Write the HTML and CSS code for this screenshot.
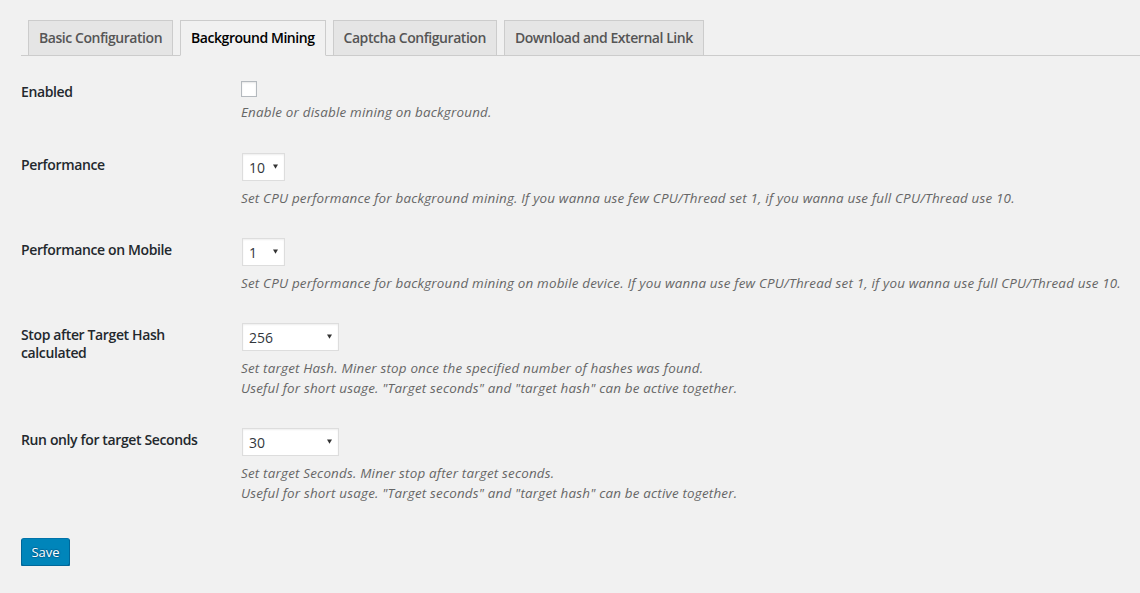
FILE: index.html
```html
<!DOCTYPE html>
<html lang="en">
<head>
<meta charset="utf-8">
<title>Background Mining</title>
<link rel="stylesheet" href="styles.css">
</head>
<body>
<div class="wrap">
  <nav class="tabs">
    <a class="tab">Basic Configuration</a>
    <a class="tab active">Background Mining</a>
    <a class="tab">Captcha Configuration</a>
    <a class="tab">Download and External Link</a>
  </nav>
  <form class="settings">
    <table class="form-table">
      <tr class="row-check">
        <th>Enabled</th>
        <td>
          <div class="ctl-check"><span class="checkbox"></span></div>
          <p class="description">Enable or disable mining on background.</p>
        </td>
      </tr>
      <tr>
        <th>Performance</th>
        <td>
          <div class="select small"><span class="val">10</span><svg class="arrow" width="5" height="5" viewBox="0 0 5 5"><polygon points="0,0.5 5,0.5 2.5,4.8" fill="#333"/></svg></div>
          <p class="description">Set CPU performance for background mining. If you wanna use few CPU/Thread set 1, if you wanna use full CPU/Thread use 10.</p>
        </td>
      </tr>
      <tr>
        <th>Performance on Mobile</th>
        <td>
          <div class="select small"><span class="val">1</span><svg class="arrow" width="5" height="5" viewBox="0 0 5 5"><polygon points="0,0.5 5,0.5 2.5,4.8" fill="#333"/></svg></div>
          <p class="description">Set CPU performance for background mining on mobile device. If you wanna use few CPU/Thread set 1, if you wanna use full CPU/Thread use 10.</p>
        </td>
      </tr>
      <tr>
        <th>Stop after Target Hash calculated</th>
        <td>
          <div class="select wide"><span class="val">256</span><svg class="arrow" width="5" height="5" viewBox="0 0 5 5"><polygon points="0,0.5 5,0.5 2.5,4.8" fill="#333"/></svg></div>
          <p class="description">Set target Hash. Miner stop once the specified number of hashes was found.<br>Useful for short usage. "Target seconds" and "target hash" can be active together.</p>
        </td>
      </tr>
      <tr>
        <th>Run only for target Seconds</th>
        <td>
          <div class="select wide"><span class="val">30</span><svg class="arrow" width="5" height="5" viewBox="0 0 5 5"><polygon points="0,0.5 5,0.5 2.5,4.8" fill="#333"/></svg></div>
          <p class="description">Set target Seconds. Miner stop after target seconds.<br>Useful for short usage. "Target seconds" and "target hash" can be active together.</p>
        </td>
      </tr>
    </table>
    <div class="submit"><button type="button" class="button-primary">Save</button></div>
  </form>
</div>
</body>
</html>
```

FILE: styles.css
```css
html, body {
  margin: 0;
  background: #f1f1f1;
}
body {
  font-family: "Open Sans", "Noto Sans", "Liberation Sans", sans-serif;
  font-size: 13px;
  color: #444;
}
.wrap {
  padding-left: 21px;
}
.tabs {
  display: flex;
  gap: 7px;
  padding: 20px 0 0 7px;
  border-bottom: 1px solid #ccc;
}
.tab {
  display: block;
  padding: 5px 10px;
  line-height: 24px;
  font-size: 14px;
  font-weight: 600;
  letter-spacing: -0.45px;
  color: #555;
  background: #e5e5e5;
  border: 1px solid #ccc;
  margin-bottom: -1px;
  white-space: nowrap;
  text-decoration: none;
}
.tab.active {
  background: #f1f1f1;
  color: #000;
  border-bottom-color: #f1f1f1;
}
.settings {
  margin-top: 8px;
}
.form-table {
  border-collapse: collapse;
}
.form-table th {
  width: 200px;
  padding: 19px 10px 14px 0;
  text-align: left;
  vertical-align: top;
  font-size: 14px;
  font-weight: 600;
  line-height: 18px;
  letter-spacing: -0.37px;
  color: #23282d;
}
.form-table td {
  padding: 16px 10px 14px;
  vertical-align: top;
}
.row-check td {
  padding-bottom: 15px;
}
.ctl-check {
  padding-top: 1px;
}
.checkbox {
  display: block;
  box-sizing: border-box;
  width: 16px;
  height: 16px;
  border: 1px solid #b4b9be;
  background: #fff;
  box-shadow: inset 0 1px 2px rgba(0,0,0,.1);
}
.row-check .description {
  margin-top: 5px;
}
.select {
  display: flex;
  align-items: center;
  justify-content: space-between;
  box-sizing: border-box;
  height: 28px;
  margin-left: 1px;
  padding: 0 6px 0 6px;
  background: #fff;
  border: 1px solid #ddd;
  box-shadow: inset 0 1px 2px rgba(0,0,0,.07);
  font-size: 14px;
  color: #32373c;
}
.select.small { width: 43px; }
.select.wide { width: 97px; }
.arrow {
  display: block;
  margin-top: -2px;
}
.description {
  margin: 7px 0 0;
  font-size: 13.4px;
  line-height: 20px;
  letter-spacing: 0.2px;
  font-style: italic;
  color: #666;
}
.submit {
  padding-top: 21px;
}
.button-primary {
  display: block;
  height: 28px;
  width: 49px;
  padding: 0;
  font-family: inherit;
  font-size: 13px;
  color: #fff;
  background: #0085ba;
  border: 1px solid #0073aa;
  border-color: #0073aa #006799 #006799;
  border-radius: 3px;
  box-shadow: 0 1px 0 #006799;
  text-shadow: 0 -1px 1px #006799, 1px 0 1px #006799, 0 1px 1px #006799, -1px 0 1px #006799;
  cursor: pointer;
}
```
